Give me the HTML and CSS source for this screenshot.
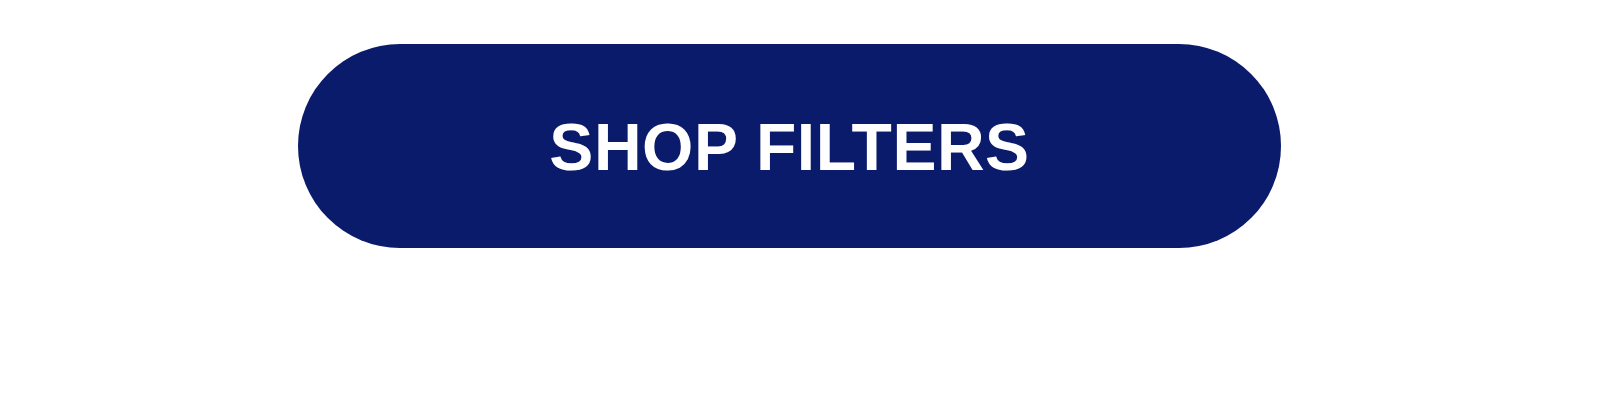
FILE: index.html
```html
<!DOCTYPE html>
<html>
<head>
<meta charset="utf-8">
<link rel="stylesheet" href="styles.css">
</head>
<body>
<div class="page">
  <a class="shop-btn" href="#">SHOP FILTERS</a>
</div>
</body>
</html>
```

FILE: styles.css
```css
html, body {
  margin: 0;
  padding: 0;
  background: #ffffff;
}
.page {
  padding: 44px 0 0 298px;
  height: 413px;
  box-sizing: border-box;
}
.shop-btn {
  display: flex;
  align-items: center;
  justify-content: center;
  width: 983px;
  height: 204px;
  border-radius: 102px;
  background: #0b1b6b;
  color: #ffffff;
  text-decoration: none;
  font-family: "Liberation Sans", Arial, sans-serif;
  font-weight: 700;
  font-size: 66px;
  letter-spacing: 0.5px;
  line-height: 1;
  padding-top: 2px;
  box-sizing: border-box;
}
```
